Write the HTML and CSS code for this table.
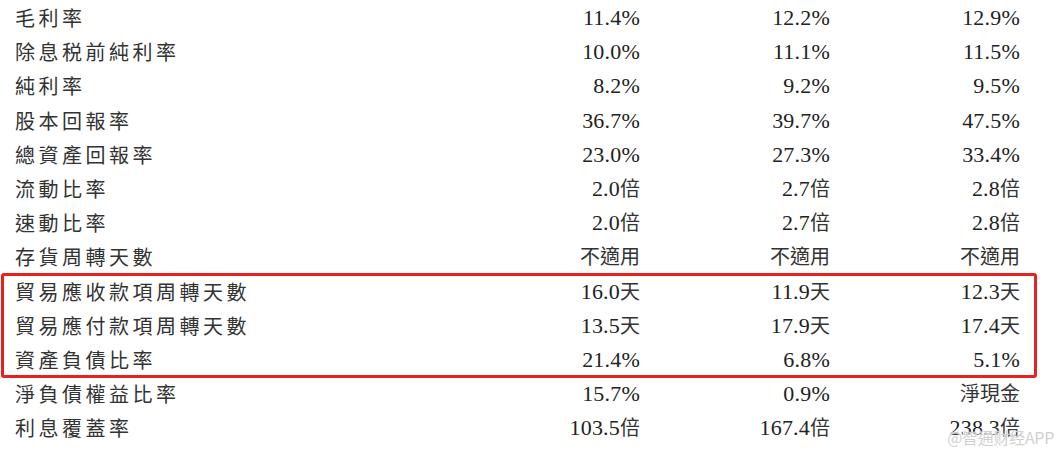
FILE: index.html
```html
<!DOCTYPE html>
<html lang="zh-Hant">
<head>
<meta charset="utf-8">
<link rel="stylesheet" href="styles.css">
</head>
<body>
<div class="sheet">
  <div class="row"><span class="label">毛利率</span><span class="num">11.4%</span><span class="num">12.2%</span><span class="num">12.9%</span></div>
  <div class="row"><span class="label">除息税前純利率</span><span class="num">10.0%</span><span class="num">11.1%</span><span class="num">11.5%</span></div>
  <div class="row"><span class="label">純利率</span><span class="num">8.2%</span><span class="num">9.2%</span><span class="num">9.5%</span></div>
  <div class="row"><span class="label">股本回報率</span><span class="num">36.7%</span><span class="num">39.7%</span><span class="num">47.5%</span></div>
  <div class="row"><span class="label">總資產回報率</span><span class="num">23.0%</span><span class="num">27.3%</span><span class="num">33.4%</span></div>
  <div class="row"><span class="label">流動比率</span><span class="num">2.0<span class="cjk">倍</span></span><span class="num">2.7<span class="cjk">倍</span></span><span class="num">2.8<span class="cjk">倍</span></span></div>
  <div class="row"><span class="label">速動比率</span><span class="num">2.0<span class="cjk">倍</span></span><span class="num">2.7<span class="cjk">倍</span></span><span class="num">2.8<span class="cjk">倍</span></span></div>
  <div class="row"><span class="label">存貨周轉天數</span><span class="num"><span class="cjk">不適用</span></span><span class="num"><span class="cjk">不適用</span></span><span class="num"><span class="cjk">不適用</span></span></div>
  <div class="group">
    <div class="row"><span class="label">貿易應收款項周轉天數</span><span class="num">16.0<span class="cjk">天</span></span><span class="num">11.9<span class="cjk">天</span></span><span class="num">12.3<span class="cjk">天</span></span></div>
    <div class="row"><span class="label">貿易應付款項周轉天數</span><span class="num">13.5<span class="cjk">天</span></span><span class="num">17.9<span class="cjk">天</span></span><span class="num">17.4<span class="cjk">天</span></span></div>
    <div class="row"><span class="label">資產負債比率</span><span class="num">21.4%</span><span class="num">6.8%</span><span class="num">5.1%</span></div>
  </div>
  <div class="row"><span class="label">淨負債權益比率</span><span class="num">15.7%</span><span class="num">0.9%</span><span class="num"><span class="cjk">淨現金</span></span></div>
  <div class="row"><span class="label">利息覆蓋率</span><span class="num">103.5<span class="cjk">倍</span></span><span class="num">167.4<span class="cjk">倍</span></span><span class="num">238.3<span class="cjk">倍</span></span></div>
</div>
<div class="watermark">@智通财经APP</div>
</body>
</html>
```
FILE: styles.css
```css
html, body {
  margin: 0;
  padding: 0;
  background: #ffffff;
  width: 1064px;
  height: 454px;
  overflow: hidden;
}
body {
  position: relative;
  color: #222;
  font-family: "Liberation Serif", "Noto Sans CJK TC", serif;
}
.sheet {
  padding-top: 1px;
}
.row {
  display: grid;
  grid-template-columns: 450px 190px 190px 190px;
  height: 34.2px;
  align-items: center;
}
.label {
  padding-left: 15px;
  font-family: "Noto Sans CJK TC", sans-serif;
  font-size: 20px;
  letter-spacing: 3.5px;
  color: #333;
  line-height: 1;
}
.num {
  text-align: right;
  font-size: 22px;
  line-height: 1;
  letter-spacing: 0.2px;
}
.cjk {
  font-family: "Noto Sans CJK TC", sans-serif;
  font-size: 20px;
  letter-spacing: 1.5px;
  color: #333;
}
.num .cjk:last-child {
  letter-spacing: 0;
}
.group {
  position: relative;
}
.group::after {
  content: "";
  position: absolute;
  left: 1px;
  top: -2px;
  width: 1030px;
  height: 99px;
  border: 3px solid #e8201e;
  border-radius: 3px;
  pointer-events: none;
}
.watermark {
  position: absolute;
  right: 10px;
  top: 425px;
  font-family: "Noto Sans CJK SC", sans-serif;
  font-size: 16px;
  color: rgba(200, 200, 200, 0.85);
  text-shadow: 0 0 2px #fff, 0 0 1px #fff;
  letter-spacing: -0.3px;
}
```
